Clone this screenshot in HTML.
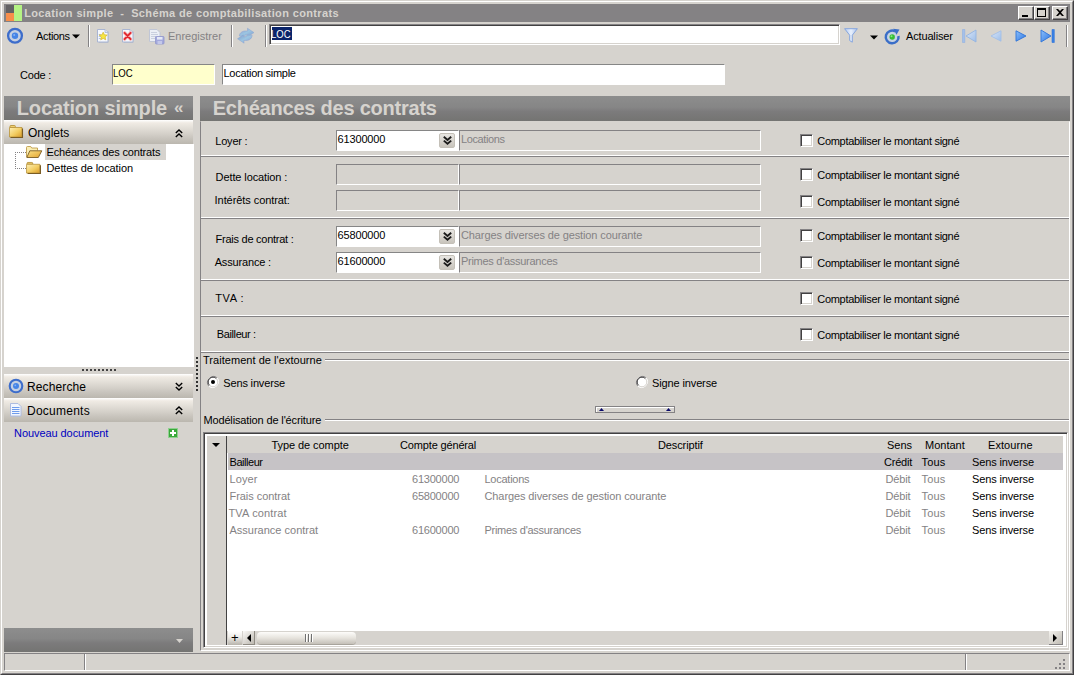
<!DOCTYPE html>
<html><head><meta charset="utf-8"><title>Location simple - Schéma de comptabilisation contrats</title>
<style>
*{box-sizing:border-box;margin:0;padding:0}
html,body{width:1074px;height:675px;overflow:hidden;background:#d6d3ce}
body{position:relative;font-family:"Liberation Sans",sans-serif;font-size:11px;color:#000}
.a{position:absolute}
.t{position:absolute;white-space:pre}
.hdr{position:absolute;background:linear-gradient(#8d8d8d,#868686 45%,#7c7b7c 62%,#747472)}
.bar{position:absolute;background:linear-gradient(#fff,#f0ebe4 12%,#dcd8d1 45%,#c9c5be 75%,#bbb7af)}
.inp{position:absolute;background:#fff;border:1px solid;border-color:#848284 #fff #fff #848284;box-shadow:inset 1px 1px 0 #424142,inset -1px -1px 0 #d6d3ce}
.inp1{position:absolute;background:#fff;border:1px solid;border-color:#868686 #fff #fff #868686}
.dis{position:absolute;background:#d6d3ce;border:1px solid;border-color:#848284 #fff #fff #848284}
.sec{position:absolute;border:1px solid;border-color:#848284 #fff #fff #848284}
.cb{position:absolute;width:13px;height:13px;background:#fff;border:1px solid;border-color:#848284 #fff #fff #848284;box-shadow:inset 1px 1px 0 #424142,inset -1px -1px 0 #d6d3ce}
.sep{position:absolute;width:2px;border-left:1px solid #848284;border-right:1px solid #fff}
.wb{position:absolute;top:6px;width:16px;height:14px;background:#d6d3ce;border:1px solid;border-color:#fff #424142 #424142 #fff;box-shadow:inset -1px -1px 0 #848284}
.dd{position:absolute;width:16px;height:15px;background:linear-gradient(#e8e6e2,#c8c4bc);border:1px solid #c4c0b8;border-radius:2px}
.gl{position:absolute;height:2px;border-top:1px solid #848284;border-bottom:1px solid #fff}
svg{position:absolute;overflow:visible}
</style></head><body>
<!-- window frame -->
<div class="a" style="left:0;top:0;width:1074px;height:675px;border:1px solid;border-color:#d6d3ce #424142 #424142 #d6d3ce"></div>
<div class="a" style="left:1px;top:1px;width:1072px;height:673px;border:1px solid;border-color:#fff #848284 #848284 #fff"></div>
<!-- title bar -->
<div class="a" style="left:4px;top:4px;width:1066px;height:18px;background:#848284"></div>
<div class="a" style="left:6px;top:5px;width:8px;height:8px;background:#636163"></div>
<div class="a" style="left:6px;top:13px;width:8px;height:8px;background:#f78e4a"></div>
<div class="a" style="left:14px;top:5px;width:8px;height:16px;background:#b5f384"></div>
<div class="wb" style="left:1018px"><div class="a" style="left:3px;top:8px;width:6px;height:2px;background:#000"></div></div>
<div class="wb" style="left:1034px"><div class="a" style="left:2px;top:1px;width:9px;height:9px;border:1px solid #000;border-top-width:2px"></div></div>
<div class="wb" style="left:1052px"><svg style="left:3px;top:2px" width="8" height="7" viewBox="0 0 8 7"><path d="M0 0h2l2 2 2-2h2L5 3.5 8 7H6L4 5 2 7H0l3-3.500z" fill="#000"/></svg></div>
<!-- toolbar -->
<svg style="left:6px;top:27px" width="18" height="18" viewBox="0 0 18 18"><circle cx="9" cy="8.800" r="6.900" fill="#c6d0e2" stroke="#3d6dcb" stroke-width="2.300"/><circle cx="9" cy="8.800" r="3.200" fill="#4684e6"/><circle cx="8.200" cy="8" r="1" fill="#86b2f4"/></svg>
<svg style="left:72px;top:34px" width="8" height="5" viewBox="0 0 8 5"><path d="M0 0.500h8L4 4.500z" fill="#000"/></svg>
<div class="sep" style="left:88px;top:25px;height:22px"></div>
<svg style="left:96.500px;top:29px" width="13" height="14" viewBox="0 0 13 14"><path d="M2 2h9.500v12H2z" fill="#aab2c8" opacity=".55"/><path d="M0.500 0.500h7.500l3 3v9.500h-10.500z" fill="#f6f8fd" stroke="#a9b5d2"/><path d="M8 0.500v3h3" fill="#dde4f2" stroke="#a9b5d2" stroke-width=".8"/><path d="M1.800 5.500h2M1.800 7.500h2M1.800 9.500h2" stroke="#9db4de" stroke-width=".8"/><path d="M6.200 3.200l1.200 2.600 2.800.3-2.100 1.900.6 2.800-2.500-1.400-2.500 1.400.6-2.800-2.100-1.900 2.800-.3z" fill="#f6e642" stroke="#d6b42a" stroke-width=".7"/></svg>
<svg style="left:122px;top:29px" width="13" height="14" viewBox="0 0 13 14"><path d="M2 2h9.500v12H2z" fill="#aab2c8" opacity=".55"/><path d="M0.500 0.500h7.500l3 3v9.500h-10.500z" fill="#f6f8fd" stroke="#a9b5d2"/><path d="M8 0.500v3h3" fill="#dde4f2" stroke="#a9b5d2" stroke-width=".8"/><path d="M2.600 3.800l6 6.400M8.600 3.800l-6 6.400" stroke="#f6b0b0" stroke-width="3.200" stroke-linecap="round"/><path d="M2.600 3.800l6 6.400M8.600 3.800l-6 6.400" stroke="#e0262e" stroke-width="1.700" stroke-linecap="round"/></svg>
<svg style="left:148.500px;top:29px" width="16" height="16" viewBox="0 0 16 16"><path d="M0.500 0.500h7.500l3 3v9h-10.500z" fill="#eceff6" stroke="#c0c6d6"/><path d="M2 3.500h6M2 5.500h7M2 7.500h5M2 9.500h4" stroke="#c6ccdc" stroke-width=".9"/><rect x="6.500" y="7.500" width="8.500" height="7.500" rx=".8" fill="#a3a8dc" stroke="#9096cc" stroke-width=".8"/><rect x="8" y="8" width="5.500" height="2.600" fill="#e4e8f6"/><rect x="8.500" y="12" width="4.500" height="3" fill="#c4c8ea"/></svg>
<div class="sep" style="left:231px;top:25px;height:22px"></div>
<svg style="left:237px;top:27px" width="18" height="18" viewBox="0 0 18 18"><defs><linearGradient id="rf" x1="0" y1="0" x2="1" y2="1"><stop offset="0" stop-color="#8a98d0"/><stop offset=".5" stop-color="#9cc6e2"/><stop offset="1" stop-color="#7f9ccc"/></linearGradient></defs><path d="M2.300 9C2.800 5 6 3.500 10.600 4L10.400 1.200 17 5.600 11.200 9.600 11 7.700C9.200 7.500 8 8 7.400 9.400z" fill="url(#rf)" stroke="#8ca4d0" stroke-width=".5"/><path d="M2.300 9C2.800 5 6 3.500 10.600 4L10.400 1.200 17 5.600 11.200 9.600 11 7.700C9.200 7.500 8 8 7.400 9.400z" transform="rotate(180 8.750 8.700)" fill="url(#rf)" stroke="#8ca4d0" stroke-width=".5"/></svg>
<div class="sep" style="left:265px;top:25px;height:22px"></div>
<div class="inp" style="left:269px;top:24px;width:571px;height:21px"></div>
<div class="a" style="left:272px;top:27px;width:20px;height:13px;background:#0a246a"></div>
<svg style="left:844px;top:28px" width="14" height="15" viewBox="0 0 14 15"><defs><linearGradient id="fu" x1="0" y1="0" x2="1" y2="0"><stop offset="0" stop-color="#b4caf0"/><stop offset=".5" stop-color="#e8f0fc"/><stop offset="1" stop-color="#a8c0ec"/></linearGradient></defs><path d="M0.600 0.700h12.800L8.300 7.200v7L5.700 12.600V7.200z" fill="url(#fu)" stroke="#86a6de" stroke-width="1" stroke-linejoin="round"/></svg>
<svg style="left:870px;top:35px" width="8" height="5" viewBox="0 0 8 5"><path d="M0 0.500h8L4 4.500z" fill="#000"/></svg>
<svg style="left:883.500px;top:27.500px" width="17" height="17" viewBox="0 0 17 17"><circle cx="8.200" cy="9" r="5" fill="#c6d4e6"/><path d="M11.200 3.300A6.400 6.400 0 1 0 14.500 8" fill="none" stroke="#3a6ec8" stroke-width="2.500"/><path d="M9.200 0.800l6.300 0.800-3 5.200z" fill="#3a6ec8"/><circle cx="8.200" cy="9" r="2.700" fill="#36be34"/><circle cx="7.500" cy="8.300" r="1" fill="#8ae684"/></svg>
<svg style="left:962px;top:29px" width="15" height="14" viewBox="0 0 15 14"><defs><linearGradient id="n1" x1="0" y1="0" x2="1" y2="1"><stop offset="0" stop-color="#dce8f8"/><stop offset="1" stop-color="#9cbce8"/></linearGradient><linearGradient id="n2" x1="0" y1="0" x2="1" y2="1"><stop offset="0" stop-color="#8cc0fc"/><stop offset="1" stop-color="#2c74e0"/></linearGradient></defs><path d="M0.500 0.500h2.300v13H0.500z" fill="#a4c0ea" stroke="#90b0e0" stroke-width=".6"/><path d="M14 1v12L4 7z" fill="url(#n1)" stroke="#94b4e2" stroke-width=".9"/></svg>
<svg style="left:989.500px;top:30px" width="12" height="12" viewBox="0 0 12 12"><path d="M11 0.800v10.400L1 6z" fill="url(#n1)" stroke="#a4c0e8" stroke-width=".9"/></svg>
<svg style="left:1015px;top:30px" width="12" height="12" viewBox="0 0 12 12"><path d="M1 0.800v10.400L11 6z" fill="url(#n2)" stroke="#2f74d8" stroke-width=".9"/></svg>
<svg style="left:1040px;top:29px" width="15" height="14" viewBox="0 0 15 14"><path d="M1 1v12L11 7z" fill="url(#n2)" stroke="#2f74d8" stroke-width=".9"/><path d="M12 0.500h2.300v13H12z" fill="#3a80e4" stroke="#2f74d8" stroke-width=".6"/></svg>
<div class="sep" style="left:1066px;top:25px;height:22px"></div>
<!-- code row -->
<div class="inp1" style="left:112px;top:64px;width:103px;height:21px;background:#ffffcc"></div>
<div class="inp1" style="left:222px;top:64px;width:503px;height:21px"></div>
<!-- left panel -->
<div class="hdr" style="left:4px;top:96px;width:189px;height:24px"></div>
<div class="bar" style="left:4px;top:120px;width:189px;height:24px"></div>
<div class="a" style="left:4px;top:144px;width:190px;height:223px;background:#fff"></div>
<div class="a" style="left:45px;top:144px;width:121px;height:16px;background:#d6d3ce"></div>
<svg style="left:15px;top:152px" width="11" height="17" viewBox="0 0 11 17"><path d="M0.500 0v17M0 0.500h11M0 16.500h11" stroke="#848284" stroke-width="1" stroke-dasharray="1 1" fill="none"/></svg>
<svg width="0" height="0" style="left:0;top:0"><defs><linearGradient id="fg" x1="0" y1="0" x2="1" y2="1"><stop offset="0" stop-color="#fdf0b8"/><stop offset=".55" stop-color="#f3cd62"/><stop offset="1" stop-color="#d99a28"/></linearGradient><linearGradient id="fo" x1="0" y1="0" x2="1" y2="1"><stop offset="0" stop-color="#fbe38a"/><stop offset="1" stop-color="#e2a22c"/></linearGradient></defs></svg><svg style="left:9px;top:125px" width="15" height="13" viewBox="0 0 15 13"><path d="M1 2.500v-1.200q0-.8.800-.8h3.700q.8 0 .8.800v1.200z" fill="#f0d070" stroke="#b08a30" stroke-width=".8"/><path d="M0.500 2.500h12.500v9.500h-12.500z" fill="url(#fg)" stroke="#b8923a" stroke-width=".8"/><path d="M13.500 3.500v9H1.500" stroke="#7a5c24" fill="none" stroke-width="1.100"/></svg>
<svg style="left:26px;top:146px" width="16" height="12" viewBox="0 0 16 12"><path d="M0.500 11v-9.500q0-1 1-1h3.200l1 1.500h5.800v2.500" fill="#fbeeb4" stroke="#b8923a" stroke-width=".8"/><path d="M0.800 11.500l3-6.700h12l-3.500 6.700z" fill="url(#fo)" stroke="#7a5c24" stroke-width=".9"/></svg>
<svg style="left:26px;top:162px" width="16" height="12" viewBox="0 0 15 13" preserveAspectRatio="none"><path d="M1 2.500v-1.200q0-.8.800-.8h3.700q.8 0 .8.800v1.200z" fill="#f0d070" stroke="#b08a30" stroke-width=".8"/><path d="M0.500 2.500h12.500v9.500h-12.500z" fill="url(#fg)" stroke="#b8923a" stroke-width=".8"/><path d="M13.500 3.500v9H1.500" stroke="#7a5c24" fill="none" stroke-width="1.100"/></svg>
<svg style="left:175px;top:129px" width="8" height="9" viewBox="0 0 8 9"><path d="M0.800 4L4 1l3.200 3M0.800 8L4 5l3.200 3" fill="none" stroke="#000" stroke-width="1.400"/></svg>
<div class="a" style="left:82px;top:369px;width:34px;height:2px;background:repeating-linear-gradient(90deg,#424142 0 2px,transparent 2px 4px)"></div>
<div class="bar" style="left:4px;top:374px;width:189px;height:24px"></div>
<div class="bar" style="left:4px;top:398px;width:189px;height:24px"></div>
<svg style="left:8px;top:378px" width="16" height="16" viewBox="0 0 16 16"><circle cx="8" cy="8" r="6.300" fill="#c6d0e2" stroke="#3d6dcb" stroke-width="2.100"/><circle cx="8" cy="8" r="3" fill="#4684e6"/><circle cx="7.300" cy="7.300" r=".9" fill="#86b2f4"/></svg>
<svg style="left:175px;top:382px" width="8" height="9" viewBox="0 0 8 9"><path d="M0.800 1L4 4l3.200-3M0.800 5L4 8l3.200-3" fill="none" stroke="#000" stroke-width="1.400"/></svg>
<svg style="left:10px;top:403px" width="12" height="14" viewBox="0 0 12 14"><path d="M1.500 1.500h8.500v12h-8.500z" fill="#b8c0d4" opacity=".6"/><path d="M0.500 0.500h7.500l3 3v9.500h-10.500z" fill="#f2f6fe" stroke="#aebce0"/><path d="M2 4.500h7.500M2 6.500h7.500M2 8.500h7.500M2 10.500h7.500" stroke="#6f9cec" stroke-width="1.100"/></svg>
<svg style="left:175px;top:406px" width="8" height="9" viewBox="0 0 8 9"><path d="M0.800 4L4 1l3.200 3M0.800 8L4 5l3.200 3" fill="none" stroke="#000" stroke-width="1.400"/></svg>
<div class="a" style="left:168px;top:428px;width:10px;height:10px;background:#3aa83a;border:1px solid #8fd08f"></div>
<div class="a" style="left:170px;top:432px;width:6px;height:2px;background:#fff"></div>
<div class="a" style="left:172px;top:430px;width:2px;height:6px;background:#fff"></div>
<div class="hdr" style="left:4px;top:628px;width:189px;height:24px"></div>
<svg style="left:176px;top:639px" width="7" height="4" viewBox="0 0 7 4"><path d="M0 0h7L3.500 4z" fill="#d6d3ce"/></svg>
<!-- splitter dots -->
<div class="a" style="left:196px;top:357px;width:2px;height:36px;background:repeating-linear-gradient(180deg,#303030 0 2px,transparent 2px 4px)"></div>
<!-- right panel -->
<div class="hdr" style="left:200px;top:96px;width:870px;height:25px"></div>
<div class="a" style="left:200px;top:121px;width:870px;height:530px;border:1px solid;border-color:transparent #fff #fff #848284"></div>
<div class="gl" style="left:201px;top:155px;width:868px;border-top-color:#fff;border-bottom-color:#848284"></div>
<div class="gl" style="left:201px;top:217px;width:868px;border-top-color:#fff;border-bottom-color:#848284"></div>
<div class="gl" style="left:201px;top:279px;width:868px;border-top-color:#fff;border-bottom-color:#848284"></div>
<div class="gl" style="left:201px;top:315px;width:868px;border-top-color:#fff;border-bottom-color:#848284"></div>
<div class="gl" style="left:201px;top:351px;width:868px;border-top-color:#fff;border-bottom-color:#848284"></div>
<div class="inp1" style="left:336px;top:130px;width:123px;height:21px"></div>
<div class="dd" style="left:439px;top:133px"><svg style="left:3px;top:2px" width="9" height="9" viewBox="0 0 9 9"><path d="M0.800 0.800L4.500 4l3.700-3.200M0.800 4.600L4.500 7.800l3.700-3.200" fill="none" stroke="#1c1c1c" stroke-width="1.900"/></svg></div>
<div class="dis" style="left:459px;top:130px;width:302px;height:21px"></div>
<div class="dis" style="left:336px;top:164px;width:123px;height:21px"></div>
<div class="dis" style="left:459px;top:164px;width:302px;height:21px"></div>
<div class="dis" style="left:336px;top:190px;width:123px;height:21px"></div>
<div class="dis" style="left:459px;top:190px;width:302px;height:21px"></div>
<div class="inp1" style="left:336px;top:226px;width:123px;height:21px"></div>
<div class="dd" style="left:439px;top:229px"><svg style="left:3px;top:2px" width="9" height="9" viewBox="0 0 9 9"><path d="M0.800 0.800L4.500 4l3.700-3.200M0.800 4.600L4.500 7.800l3.700-3.200" fill="none" stroke="#1c1c1c" stroke-width="1.900"/></svg></div>
<div class="dis" style="left:459px;top:226px;width:302px;height:21px"></div>
<div class="inp1" style="left:336px;top:252px;width:123px;height:21px"></div>
<div class="dd" style="left:439px;top:255px"><svg style="left:3px;top:2px" width="9" height="9" viewBox="0 0 9 9"><path d="M0.800 0.800L4.500 4l3.700-3.200M0.800 4.600L4.500 7.800l3.700-3.200" fill="none" stroke="#1c1c1c" stroke-width="1.900"/></svg></div>
<div class="dis" style="left:459px;top:252px;width:302px;height:21px"></div>
<div class="cb" style="left:800px;top:134px"></div>
<div class="cb" style="left:800px;top:168px"></div>
<div class="cb" style="left:800px;top:195px"></div>
<div class="cb" style="left:800px;top:229px"></div>
<div class="cb" style="left:800px;top:256px"></div>
<div class="cb" style="left:800px;top:292px"></div>
<div class="cb" style="left:800px;top:328px"></div>
<div class="gl" style="left:325px;top:359px;width:744px"></div>
<div class="gl" style="left:325px;top:419px;width:744px"></div>
<svg style="left:207px;top:376px" width="12" height="12" viewBox="0 0 12 12"><circle cx="6" cy="6" r="5.500" fill="#fff"/><path d="M1.800 10.200A6 6 0 0 1 10.200 1.800" fill="none" stroke="#848284" stroke-width="1"/><path d="M2.600 9.400A4.800 4.800 0 0 1 9.400 2.600" fill="none" stroke="#424142" stroke-width="1"/><path d="M10.200 1.800A6 6 0 0 1 1.800 10.200" fill="none" stroke="#fff" stroke-width="1"/><path d="M9.400 2.600A4.800 4.800 0 0 1 2.600 9.400" fill="none" stroke="#d6d3ce" stroke-width="1"/><circle cx="6" cy="6" r="2" fill="#000"/></svg>
<svg style="left:636px;top:376px" width="12" height="12" viewBox="0 0 12 12"><circle cx="6" cy="6" r="5.500" fill="#fff"/><path d="M1.800 10.200A6 6 0 0 1 10.200 1.800" fill="none" stroke="#848284" stroke-width="1"/><path d="M2.600 9.400A4.800 4.800 0 0 1 9.400 2.600" fill="none" stroke="#424142" stroke-width="1"/><path d="M10.200 1.800A6 6 0 0 1 1.800 10.200" fill="none" stroke="#fff" stroke-width="1"/><path d="M9.400 2.600A4.800 4.800 0 0 1 2.600 9.400" fill="none" stroke="#d6d3ce" stroke-width="1"/></svg>
<div class="a" style="left:595px;top:406px;width:80px;height:7px;border:1px solid #848284;box-shadow:inset 1px 1px 0 #fff"></div>
<svg style="left:599px;top:408px" width="5" height="3" viewBox="0 0 5 3"><path d="M0 3h5L2.500 0z" fill="#0a0a6a"/></svg>
<svg style="left:666px;top:408px" width="5" height="3" viewBox="0 0 5 3"><path d="M0 3h5L2.500 0z" fill="#0a0a6a"/></svg>
<div class="a" style="left:203px;top:432px;width:865px;height:216px;background:#fff;border:1px solid;border-color:#848284 #fff #fff #848284;box-shadow:inset 1px 1px 0 #424142,inset -1px -1px 0 #d6d3ce"></div>
<div class="a" style="left:207px;top:436px;width:19px;height:209px;background:#d6d3ce"></div>
<div class="a" style="left:226px;top:436px;width:1px;height:209px;background:#424142"></div>
<div class="a" style="left:227px;top:436px;width:836px;height:17px;background:#d6d3ce"></div>
<div class="a" style="left:228px;top:453px;width:835px;height:17px;background:#c6c3c6"></div>
<svg style="left:212px;top:443px" width="8" height="4" viewBox="0 0 8 4"><path d="M0 0h8L4 4z" fill="#000"/></svg>
<div class="a" style="left:227px;top:631px;width:836px;height:14px;background:#d6d3ce"></div>
<div class="a" style="left:228px;top:631px;width:14px;height:14px;background:linear-gradient(#fff,#f0eeea 40%,#b8b4ac)"></div>
<div class="t" style="left:231px;top:630px;font-size:13px;line-height:15px">+</div>
<div class="a" style="left:243px;top:631px;width:12px;height:14px;background:linear-gradient(135deg,#fbfaf8,#bcb8b0);border-right:1px solid #908c84;border-bottom:1px solid #908c84"></div>
<svg style="left:247px;top:634px" width="4" height="8" viewBox="0 0 4 8"><path d="M4 0v8L0 4z" fill="#000"/></svg>
<div class="a" style="left:257px;top:632px;width:99px;height:12px;border-radius:4px;background:linear-gradient(#fdfcfa,#e6e3dd 50%,#c4c0b8);box-shadow:0 1px 0 #a8a49c"></div>
<div class="a" style="left:305px;top:634px;width:8px;height:8px;background:repeating-linear-gradient(90deg,#707070 0 1px,#fff 1px 2px,transparent 2px 3px)"></div>
<div class="a" style="left:1049px;top:631px;width:14px;height:14px;background:linear-gradient(135deg,#f4f2ee,#c0bcb4);border-right:1px solid #848284;border-bottom:1px solid #848284"></div>
<svg style="left:1053px;top:634px" width="4" height="8" viewBox="0 0 4 8"><path d="M0 0v8L4 4z" fill="#000"/></svg>
<div class="a" style="left:4px;top:653px;width:1066px;height:18px;border:1px solid;border-color:#848284 #fff #fff #848284"></div>
<div class="sep" style="left:84px;top:654px;height:16px"></div>
<div class="sep" style="left:965px;top:654px;height:16px"></div>
<svg style="left:1055px;top:659px" width="11" height="11" viewBox="0 0 11 11"><g fill="#848284"><rect x="8" y="0" width="2" height="2"/><rect x="4" y="4" width="2" height="2"/><rect x="8" y="4" width="2" height="2"/><rect x="0" y="8" width="2" height="2"/><rect x="4" y="8" width="2" height="2"/><rect x="8" y="8" width="2" height="2"/></g></svg>

<!-- text -->
<div class="t" style="left:24.2px;top:6px;font-size:11px;line-height:14px;font-weight:bold;color:#d6d3ce;letter-spacing:0.367px;">Location simple&nbsp; -&nbsp; Schéma de comptabilisation contrats</div>
<div class="t" style="left:36px;top:29px;font-size:11px;line-height:14px;letter-spacing:-0.333px;">Actions</div>
<div class="t" style="left:168px;top:29px;font-size:11px;line-height:14px;color:#848284;">Enregistrer</div>
<div class="t" style="left:271.3px;top:27px;font-size:11px;line-height:14px;color:#fff;transform:scaleX(0.8636);transform-origin:0px 0;">LOC</div>
<div class="t" style="left:906px;top:29px;font-size:11px;line-height:14px;letter-spacing:-0.156px;">Actualiser</div>
<div class="t" style="left:20px;top:68px;font-size:11px;line-height:14px;letter-spacing:-0.200px;">Code :</div>
<div class="t" style="left:112.8px;top:66px;font-size:11px;line-height:14px;transform:scaleX(0.8727);transform-origin:0px 0;">LOC</div>
<div class="t" style="left:223.5px;top:66px;font-size:11px;line-height:14px;letter-spacing:-0.286px;">Location simple</div>
<div class="t" style="left:16.7px;top:95px;font-size:20px;line-height:26px;font-weight:bold;color:#d6d3ce;letter-spacing:-0.121px;">Location simple</div>
<div class="t" style="left:174px;top:97px;font-size:17px;line-height:22px;font-weight:bold;color:#d6d3ce;">«</div>
<div class="t" style="left:212.7px;top:95px;font-size:20px;line-height:26px;font-weight:bold;color:#d6d3ce;letter-spacing:-0.224px;">Echéances des contrats</div>
<div class="t" style="left:28px;top:125px;font-size:12px;line-height:16px;">Onglets</div>
<div class="t" style="left:46.5px;top:145px;font-size:11px;line-height:14px;letter-spacing:-0.167px;">Echéances des contrats</div>
<div class="t" style="left:46.5px;top:161px;font-size:11px;line-height:14px;letter-spacing:-0.088px;">Dettes de location</div>
<div class="t" style="left:27px;top:379px;font-size:12px;line-height:16px;letter-spacing:0.125px;">Recherche</div>
<div class="t" style="left:27px;top:403px;font-size:12px;line-height:16px;letter-spacing:0.250px;">Documents</div>
<div class="t" style="left:14px;top:426px;font-size:11px;line-height:14px;color:#0000c0;letter-spacing:-0.067px;">Nouveau document</div>
<div class="t" style="left:215.3px;top:134px;font-size:11px;line-height:14px;letter-spacing:-0.217px;">Loyer :</div>
<div class="t" style="left:215.6px;top:170px;font-size:11px;line-height:14px;letter-spacing:-0.107px;">Dette location :</div>
<div class="t" style="left:214.6px;top:193px;font-size:11px;line-height:14px;letter-spacing:-0.069px;">Intérêts contrat:</div>
<div class="t" style="left:215.6px;top:232px;font-size:11px;line-height:14px;letter-spacing:-0.259px;">Frais de contrat :</div>
<div class="t" style="left:214.7px;top:255px;font-size:11px;line-height:14px;letter-spacing:-0.160px;">Assurance :</div>
<div class="t" style="left:215.3px;top:291px;font-size:11px;line-height:14px;letter-spacing:0.550px;">TVA :</div>
<div class="t" style="left:216.8px;top:327px;font-size:11px;line-height:14px;letter-spacing:-0.389px;">Bailleur :</div>
<div class="t" style="left:817.3px;top:134px;font-size:11px;line-height:14px;letter-spacing:-0.303px;">Comptabiliser le montant signé</div>
<div class="t" style="left:817.3px;top:168px;font-size:11px;line-height:14px;letter-spacing:-0.303px;">Comptabiliser le montant signé</div>
<div class="t" style="left:817.3px;top:195px;font-size:11px;line-height:14px;letter-spacing:-0.303px;">Comptabiliser le montant signé</div>
<div class="t" style="left:817.3px;top:229px;font-size:11px;line-height:14px;letter-spacing:-0.303px;">Comptabiliser le montant signé</div>
<div class="t" style="left:817.3px;top:256px;font-size:11px;line-height:14px;letter-spacing:-0.303px;">Comptabiliser le montant signé</div>
<div class="t" style="left:817.3px;top:292px;font-size:11px;line-height:14px;letter-spacing:-0.303px;">Comptabiliser le montant signé</div>
<div class="t" style="left:817.3px;top:328px;font-size:11px;line-height:14px;letter-spacing:-0.303px;">Comptabiliser le montant signé</div>
<div class="t" style="left:337.5px;top:132px;font-size:11px;line-height:14px;letter-spacing:-0.143px;">61300000</div>
<div class="t" style="left:337.5px;top:228px;font-size:11px;line-height:14px;letter-spacing:-0.143px;">65800000</div>
<div class="t" style="left:337.5px;top:254px;font-size:11px;line-height:14px;letter-spacing:-0.143px;">61600000</div>
<div class="t" style="left:461px;top:132px;font-size:11px;line-height:14px;color:#848284;letter-spacing:-0.375px;">Locations</div>
<div class="t" style="left:461px;top:228px;font-size:11px;line-height:14px;color:#848284;letter-spacing:-0.114px;">Charges diverses de gestion courante</div>
<div class="t" style="left:461px;top:254px;font-size:11px;line-height:14px;color:#848284;letter-spacing:-0.278px;">Primes d'assurances</div>
<div class="t" style="left:203px;top:353px;font-size:11px;line-height:14px;letter-spacing:0.043px;">Traitement de l'extourne</div>
<div class="t" style="left:223.3px;top:376px;font-size:11px;line-height:14px;letter-spacing:-0.164px;">Sens inverse</div>
<div class="t" style="left:652px;top:376px;font-size:11px;line-height:14px;letter-spacing:-0.125px;">Signe inverse</div>
<div class="t" style="left:203.4px;top:413px;font-size:11px;line-height:14px;letter-spacing:-0.136px;">Modélisation de l'écriture</div>
<div class="t" style="left:271.5px;top:438px;font-size:11px;line-height:14px;letter-spacing:-0.077px;">Type de compte</div>
<div class="t" style="left:400px;top:438px;font-size:11px;line-height:14px;letter-spacing:-0.154px;">Compte général</div>
<div class="t" style="left:658px;top:438px;font-size:11px;line-height:14px;letter-spacing:-0.111px;">Descriptif</div>
<div class="t" style="left:887px;top:438px;font-size:11px;line-height:14px;">Sens</div>
<div class="t" style="left:925px;top:438px;font-size:11px;line-height:14px;">Montant</div>
<div class="t" style="left:988px;top:438px;font-size:11px;line-height:14px;letter-spacing:0.071px;">Extourne</div>
<div class="t" style="left:229.5px;top:455px;font-size:11px;line-height:14px;letter-spacing:-0.457px;">Bailleur</div>
<div class="t" style="left:884px;top:455px;font-size:11px;line-height:14px;letter-spacing:-0.200px;">Crédit</div>
<div class="t" style="left:921.5px;top:455px;font-size:11px;line-height:14px;letter-spacing:0.167px;">Tous</div>
<div class="t" style="left:972px;top:455px;font-size:11px;line-height:14px;letter-spacing:-0.136px;">Sens inverse</div>
<div class="t" style="left:229.5px;top:472px;font-size:11px;line-height:14px;color:#848284;letter-spacing:0.125px;">Loyer</div>
<div class="t" style="left:412px;top:472px;font-size:11px;line-height:14px;color:#848284;letter-spacing:-0.214px;">61300000</div>
<div class="t" style="left:484.5px;top:472px;font-size:11px;line-height:14px;color:#848284;letter-spacing:-0.250px;">Locations</div>
<div class="t" style="left:885.5px;top:472px;font-size:11px;line-height:14px;color:#848284;letter-spacing:-0.125px;">Débit</div>
<div class="t" style="left:921.5px;top:472px;font-size:11px;line-height:14px;color:#848284;letter-spacing:0.167px;">Tous</div>
<div class="t" style="left:972px;top:472px;font-size:11px;line-height:14px;letter-spacing:-0.136px;">Sens inverse</div>
<div class="t" style="left:229.5px;top:489px;font-size:11px;line-height:14px;color:#848284;letter-spacing:-0.042px;">Frais contrat</div>
<div class="t" style="left:412px;top:489px;font-size:11px;line-height:14px;color:#848284;letter-spacing:-0.214px;">65800000</div>
<div class="t" style="left:484.5px;top:489px;font-size:11px;line-height:14px;color:#848284;letter-spacing:-0.100px;">Charges diverses de gestion courante</div>
<div class="t" style="left:885.5px;top:489px;font-size:11px;line-height:14px;color:#848284;letter-spacing:-0.125px;">Débit</div>
<div class="t" style="left:921.5px;top:489px;font-size:11px;line-height:14px;color:#848284;letter-spacing:0.167px;">Tous</div>
<div class="t" style="left:972px;top:489px;font-size:11px;line-height:14px;letter-spacing:-0.136px;">Sens inverse</div>
<div class="t" style="left:228.5px;top:506px;font-size:11px;line-height:14px;color:#848284;letter-spacing:0.150px;">TVA contrat</div>
<div class="t" style="left:885.5px;top:506px;font-size:11px;line-height:14px;color:#848284;letter-spacing:-0.125px;">Débit</div>
<div class="t" style="left:921.5px;top:506px;font-size:11px;line-height:14px;color:#848284;letter-spacing:0.167px;">Tous</div>
<div class="t" style="left:972px;top:506px;font-size:11px;line-height:14px;letter-spacing:-0.136px;">Sens inverse</div>
<div class="t" style="left:229.5px;top:523px;font-size:11px;line-height:14px;color:#848284;">Assurance contrat</div>
<div class="t" style="left:412px;top:523px;font-size:11px;line-height:14px;color:#848284;letter-spacing:-0.214px;">61600000</div>
<div class="t" style="left:484.5px;top:523px;font-size:11px;line-height:14px;color:#848284;letter-spacing:-0.278px;">Primes d'assurances</div>
<div class="t" style="left:885.5px;top:523px;font-size:11px;line-height:14px;color:#848284;letter-spacing:-0.125px;">Débit</div>
<div class="t" style="left:921.5px;top:523px;font-size:11px;line-height:14px;color:#848284;letter-spacing:0.167px;">Tous</div>
<div class="t" style="left:972px;top:523px;font-size:11px;line-height:14px;letter-spacing:-0.136px;">Sens inverse</div>
</body></html>
